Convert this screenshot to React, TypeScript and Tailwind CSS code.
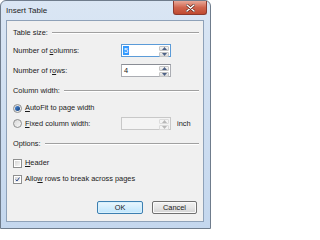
import React from "react";

const font = { fontFamily: '"Liberation Sans", Arial, sans-serif' };

function U({ children }: { children: React.ReactNode }) {
  return <span className="underline underline-offset-[1px]">{children}</span>;
}

function SectionHeader({ label }: { label: string }) {
  return (
    <div className="flex h-[14px] items-center gap-[4px]">
      <span className="whitespace-nowrap">{label}</span>
      <div className="h-[2px] flex-1 border-t border-b border-t-[#a0a0a0] border-b-white" />
    </div>
  );
}

function Spinner({ disabled }: { disabled?: boolean }) {
  const arrow = disabled ? "#b8b8b8" : "#4d6185";
  return (
    <div className="flex w-[12px] flex-col gap-px p-px">
      <div
        className={`flex flex-1 items-center justify-center rounded-[1px] border ${
          disabled ? "border-[#dcdcdc] bg-[#f4f4f4]" : "border-[#c6c6c6] bg-gradient-to-b from-[#f6f6f6] to-[#dedede]"
        }`}
      >
        <svg width="5" height="3" viewBox="0 0 5 3">
          <path d="M2.5 0 L5 3 L0 3 Z" fill={arrow} />
        </svg>
      </div>
      <div
        className={`flex flex-1 items-center justify-center rounded-[1px] border ${
          disabled ? "border-[#dcdcdc] bg-[#f4f4f4]" : "border-[#c6c6c6] bg-gradient-to-b from-[#f0f0f0] to-[#d8d8d8]"
        }`}
      >
        <svg width="5" height="3" viewBox="0 0 5 3">
          <path d="M0 0 L5 0 L2.5 3 Z" fill={arrow} />
        </svg>
      </div>
    </div>
  );
}

function SpinBox({ value, focused, disabled, width }: { value?: string; focused?: boolean; disabled?: boolean; width: string }) {
  return (
    <div
      className={`flex h-[13px] ${width} border ${
        focused ? "border-[#5b9bd8]" : disabled ? "border-[#c8c8c8]" : "border-[#abadb3] border-t-[#8a8d95]"
      } ${disabled ? "bg-[#f4f4f4]" : "bg-white"}`}
    >
      <div className="flex flex-1 items-center pl-[1px]">
        {value && (
          <span className={`px-px leading-[9px] ${focused ? "bg-[#3399ff] text-white" : ""}`}>{value}</span>
        )}
      </div>
      <Spinner disabled={disabled} />
    </div>
  );
}

function Radio({ checked }: { checked?: boolean }) {
  return (
    <div className="flex h-[9px] w-[9px] items-center justify-center rounded-full border border-[#8e8f8f] bg-gradient-to-br from-[#d8d8d8] to-[#f8f8f8]">
      {checked && <div className="h-[5px] w-[5px] rounded-full bg-gradient-to-br from-[#4a8ad8] to-[#123e7a]" />}
    </div>
  );
}

function Checkbox({ checked }: { checked?: boolean }) {
  return (
    <div className="flex h-[9px] w-[9px] items-center justify-center border border-[#8e8f8f] bg-white p-px">
      <div className="flex h-full w-full items-center justify-center bg-gradient-to-br from-[#d6d6d6] to-[#f6f6f6]">
        {checked && (
          <svg width="7" height="7" viewBox="0 0 7 7">
            <path d="M1 3.6 L2.8 5.6 L6.2 0.8" stroke="#1f3f86" strokeWidth="1.3" fill="none" />
          </svg>
        )}
      </div>
    </div>
  );
}

export default function App() {
  return (
    <div className="h-[229px] w-[211px] text-[7.4px] text-[#1a1a1a]" style={font}>
      <div className="flex h-full w-full flex-col rounded-t-[6px] border border-[#6f7c8c] bg-gradient-to-b from-[#dae6f4] to-[#c4d7ee]">
        {/* Title bar */}
        <div className="flex h-[19px] shrink-0 items-start justify-between pl-[5px]">
          <span className="mt-[4px] text-[8px] text-[#1e1e1e]">Insert Table</span>
          <div className="mr-[3px] flex h-[14px] w-[34px] items-center justify-center rounded-b-[3px] border border-t-0 border-[#8c3a2e] bg-gradient-to-b from-[#e8a898] via-[#d0654e] to-[#c04a30]">
            <svg width="9" height="8" viewBox="0 0 9 8">
              <path d="M1 1 L8 7 M8 1 L1 7" stroke="#4a1a12" strokeWidth="2.6" strokeLinecap="round" />
              <path d="M1 1 L8 7 M8 1 L1 7" stroke="#ffffff" strokeWidth="1.6" strokeLinecap="round" />
            </svg>
          </div>
        </div>

        {/* Client area */}
        <div className="mb-[6px] ml-[5px] mr-[6px] flex flex-1 flex-col border border-[#8ea1b8] bg-[#f0f0f0] pl-[6px] pr-[4px] pt-[5px]">
          <SectionHeader label="Table size:" />

          <div className="mt-[4px] flex h-[13px] items-center">
            <span className="w-[108px]">
              Number of <U>c</U>olumns:
            </span>
            <SpinBox value="5" focused width="w-[50px]" />
          </div>

          <div className="mt-[7px] flex h-[13px] items-center">
            <span className="w-[108px]">
              Number of r<U>o</U>ws:
            </span>
            <SpinBox value="4" width="w-[50px]" />
          </div>

          <div className="mt-[7px]">
            <SectionHeader label="Column width:" />
          </div>

          <div className="mt-[3px] flex h-[14px] items-center gap-[3px]">
            <Radio checked />
            <span>
              <U>A</U>utoFit to page width
            </span>
          </div>

          <div className="mt-[2px] flex h-[13px] items-center">
            <div className="flex w-[108px] items-center gap-[3px]">
              <Radio />
              <span>
                <U>F</U>ixed column width:
              </span>
            </div>
            <SpinBox disabled width="w-[50px]" />
            <span className="ml-[6px]">inch</span>
          </div>

          <div className="mt-[7px]">
            <SectionHeader label="Options:" />
          </div>

          <div className="mt-[5px] flex h-[14px] items-center gap-[3px]">
            <Checkbox />
            <span>
              <U>H</U>eader
            </span>
          </div>

          <div className="mt-[2px] flex h-[14px] items-center gap-[3px]">
            <Checkbox checked />
            <span>
              Allo<U>w</U> rows to break across pages
            </span>
          </div>

          <div className="mt-[15px] flex justify-end gap-[9px] pr-[2px]">
            <button className="flex h-[13px] w-[46px] items-center justify-center rounded-[2px] border border-[#3c7fb1] bg-gradient-to-b from-[#eaf6fd] to-[#bee6fd] shadow-[inset_0_0_0_1px_#d8f0fc]">
              OK
            </button>
            <button className="flex h-[13px] w-[45px] items-center justify-center rounded-[2px] border border-[#707070] bg-gradient-to-b from-[#f2f2f2] via-[#e6e6e6] to-[#d2d2d2] shadow-[inset_0_0_0_1px_#fafafa]">
              Cancel
            </button>
          </div>
        </div>
      </div>
    </div>
  );
}
